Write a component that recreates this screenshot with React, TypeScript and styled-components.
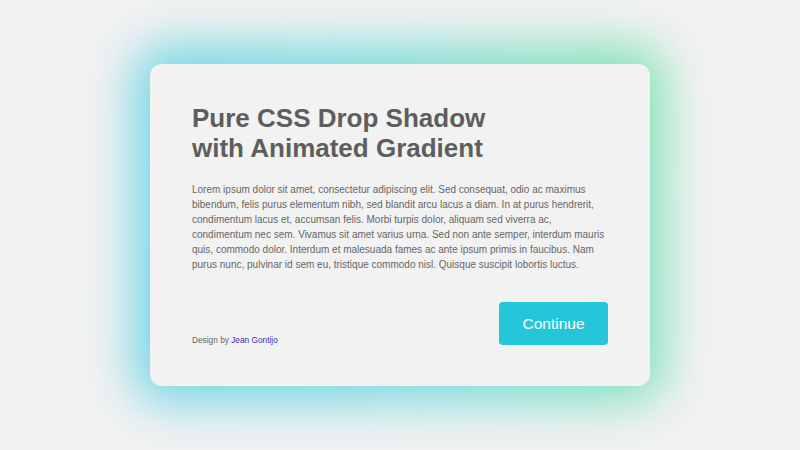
import styled, { createGlobalStyle } from "styled-components";

const GlobalStyle = createGlobalStyle`
	* {
		box-sizing: border-box;
	}
	html, body {
		margin: 0;
		padding: 0;
		background: #f2f2f2;
		font-family: "Liberation Sans", Arial, sans-serif;
	}
`;

export default function App() {
	return (
		<>
			<GlobalStyle />
			<Page>
				<Card>
					<Title>
						Pure CSS Drop Shadow
						<br />
						with Animated Gradient
					</Title>
					<Text>
						Lorem ipsum dolor sit amet, consectetur adipiscing elit. Sed consequat, odio ac maximus
						bibendum, felis purus elementum nibh, sed blandit arcu lacus a diam. In at purus hendrerit,
						condimentum lacus et, accumsan felis. Morbi turpis dolor, aliquam sed viverra ac,
						condimentum nec sem. Vivamus sit amet varius urna. Sed non ante semper, interdum mauris
						quis, commodo dolor. Interdum et malesuada fames ac ante ipsum primis in faucibus. Nam
						purus nunc, pulvinar id sem eu, tristique commodo nisl. Quisque suscipit lobortis luctus.
					</Text>
					<Footer>
						<Credit>
							Design by <a href="#">Jean Gontijo</a>
						</Credit>
						<Button>Continue</Button>
					</Footer>
				</Card>
			</Page>
		</>
	);
}

const Page = styled.main`
	width: 100vw;
	height: 100vh;
	display: flex;
	align-items: center;
	justify-content: center;
	overflow: hidden;
`;

const Card = styled.section`
	position: relative;
	width: 500px;
	height: 322px;
	padding: 39px 42px 41px;
	background: #f2f2f2;
	border-radius: 12px;
	display: flex;
	flex-direction: column;
	isolation: isolate;
	&::before {
		content: "";
		position: absolute;
		inset: -18px -14px -16px -16px;
		border-radius: 30px;
		background: linear-gradient(75deg, #6fd5e6 0%, #78d9e0 45%, #80e0c6 75%, #80e3b0 100%);
		filter: blur(24px);
		z-index: -2;
	}
	&::after {
		content: "";
		position: absolute;
		inset: 0;
		border-radius: 12px;
		background: #f2f2f2;
		z-index: -1;
	}
`;

const Title = styled.h1`
	margin: 0;
	font-size: 26px;
	line-height: 30px;
	font-weight: 700;
	color: #5e5e5e;
`;

const Text = styled.p`
	margin: 19px 0 0;
	font-size: 10px;
	line-height: 15px;
	color: #666;
`;

const Footer = styled.div`
	margin-top: auto;
	display: flex;
	align-items: flex-end;
	justify-content: space-between;
`;

const Credit = styled.p`
	margin: 0;
	font-size: 8.3px;
	color: #666;
	a {
		color: #3b2fb0;
		text-decoration: none;
	}
`;

const Button = styled.button`
	width: 109px;
	height: 43px;
	border: none;
	border-radius: 4px;
	background: #26c6da;
	color: #fff;
	font-family: "Liberation Sans", Arial, sans-serif;
	font-size: 15.5px;
`;
